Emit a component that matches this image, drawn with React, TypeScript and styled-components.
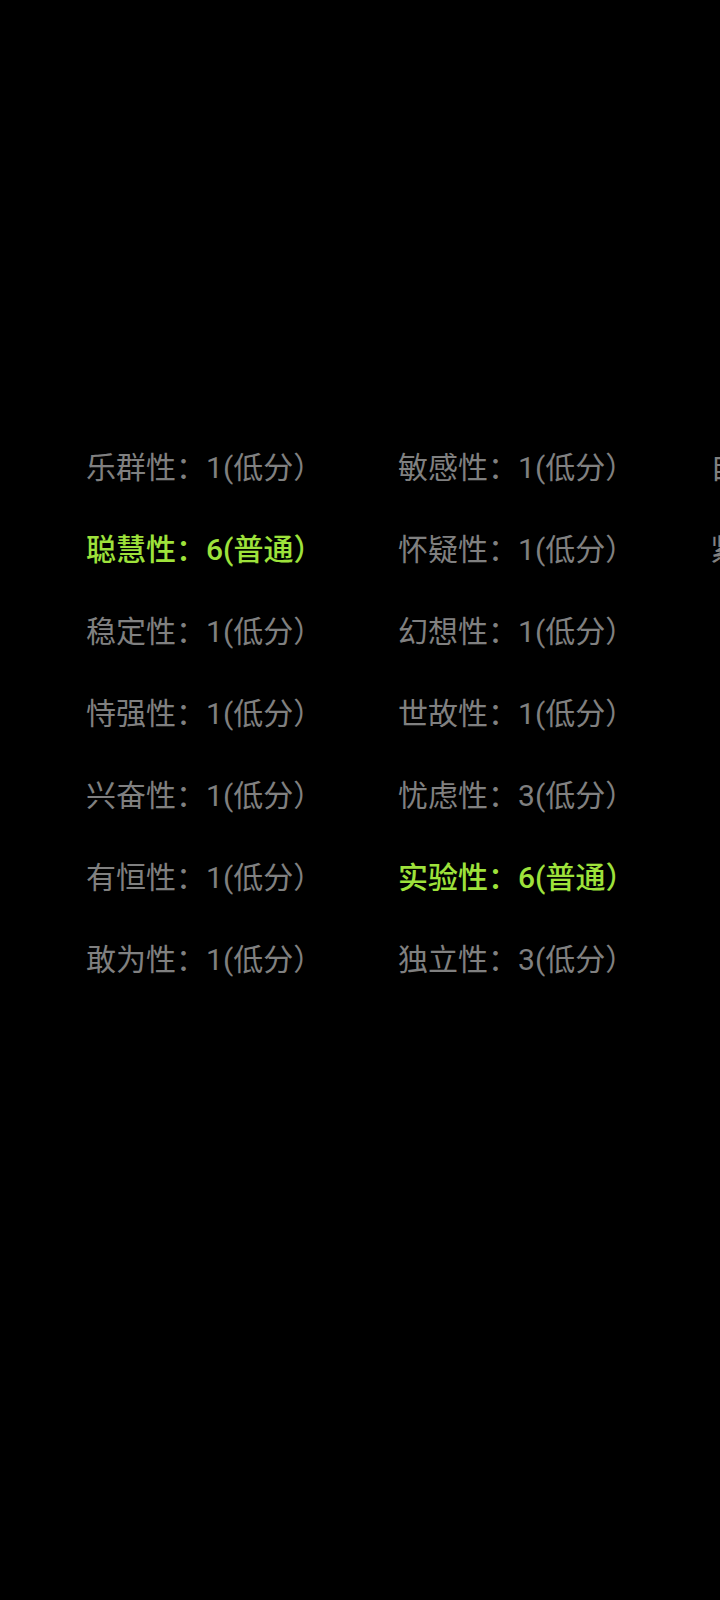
import React from "react";
import styled, { createGlobalStyle } from "styled-components";

const Global = createGlobalStyle`
  html, body {
    margin: 0;
    padding: 0;
    background: #000;
  }
  body {
    width: 720px;
    min-height: 1600px;
    overflow: hidden;
    font-family: Roboto, "Noto Sans CJK SC", sans-serif;
  }
`;

const Screen = styled.div`
  width: 720px;
  height: 1600px;
  background: #000;
  overflow: hidden;
  padding: 427px 0 0 86px;
  box-sizing: border-box;
`;

const Grid = styled.div`
  display: grid;
  grid-auto-flow: column;
  grid-template-rows: repeat(7, 82px);
  grid-auto-columns: 312px;
  width: max-content;
`;

const Factor = styled.div<{ $highlight: boolean }>`
  font-family: Roboto, "Noto Sans CJK SC", sans-serif;
  font-size: 30px;
  line-height: 82px;
  white-space: nowrap;
  color: ${(p) => (p.$highlight ? "#9ee23b" : "#808080")};
  font-weight: ${(p) => (p.$highlight ? 500 : 400)};
`;

type Item = { name: string; score: number; level: string };

const items: Item[] = [
  { name: "乐群性", score: 1, level: "低分" },
  { name: "聪慧性", score: 6, level: "普通" },
  { name: "稳定性", score: 1, level: "低分" },
  { name: "恃强性", score: 1, level: "低分" },
  { name: "兴奋性", score: 1, level: "低分" },
  { name: "有恒性", score: 1, level: "低分" },
  { name: "敢为性", score: 1, level: "低分" },
  { name: "敏感性", score: 1, level: "低分" },
  { name: "怀疑性", score: 1, level: "低分" },
  { name: "幻想性", score: 1, level: "低分" },
  { name: "世故性", score: 1, level: "低分" },
  { name: "忧虑性", score: 3, level: "低分" },
  { name: "实验性", score: 6, level: "普通" },
  { name: "独立性", score: 3, level: "低分" },
  { name: "自律性", score: 1, level: "低分" },
  { name: "紧张性", score: 3, level: "低分" },
];

export default function App() {
  return (
    <>
      <Global />
      <Screen>
        <Grid>
          {items.map((it) => (
            <Factor key={it.name} $highlight={it.level === "普通"}>
              {it.name}：{it.score}({it.level}）
            </Factor>
          ))}
        </Grid>
      </Screen>
    </>
  );
}
